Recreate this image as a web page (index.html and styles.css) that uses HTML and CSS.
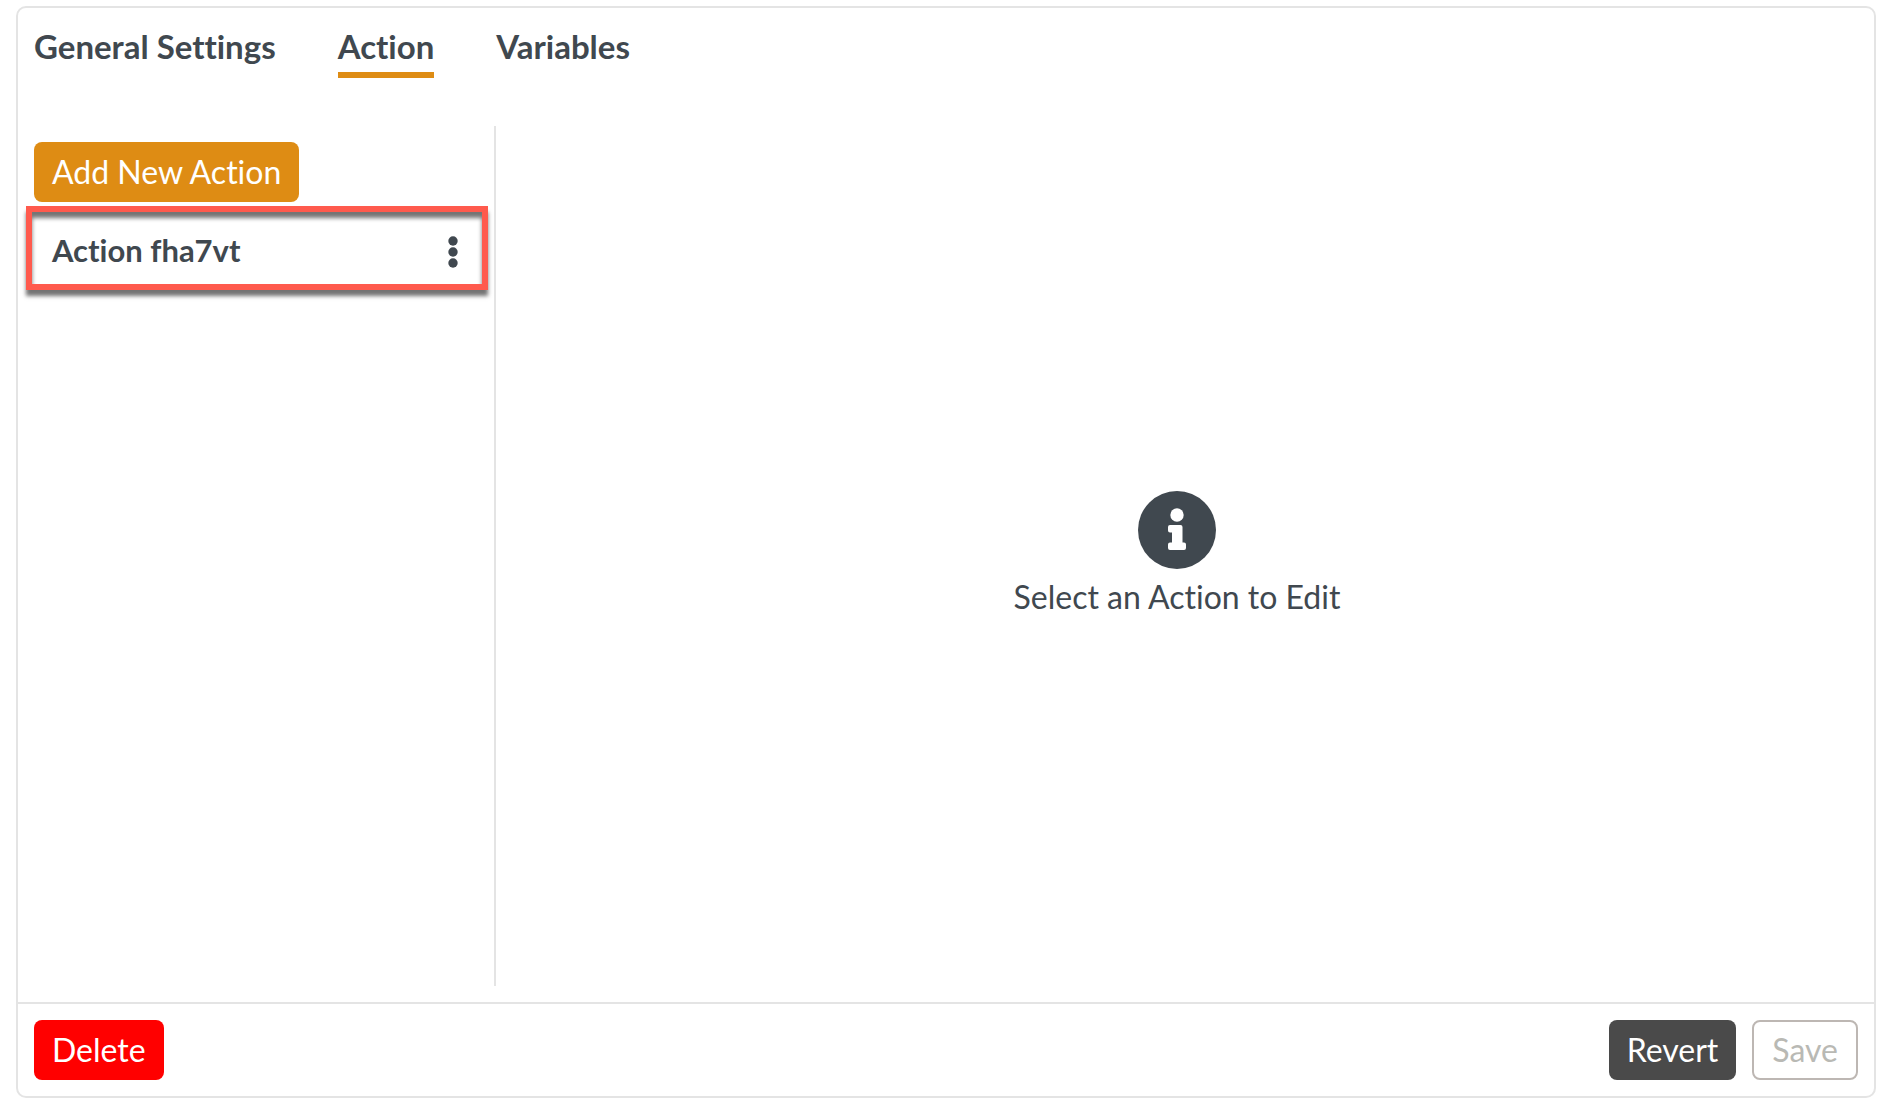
FILE: index.html
```html
<!DOCTYPE html>
<html lang="en">
<head>
    <meta charset="UTF-8">
    <meta name="viewport" content="width=device-width, initial-scale=1.0">
    <title>Action</title>
    <link rel="stylesheet" href="styles.css">
</head>
<body>
    <div class="card">
        <nav class="tabs">
            <a class="tab" href="#general">General Settings</a>
            <a class="tab active" href="#action" aria-current="page">Action</a>
            <a class="tab" href="#variables">Variables</a>
        </nav>

        <main class="content">
            <aside class="sidebar">
                <button type="button" class="btn btn-primary">Add New Action</button>
                <div class="action-row">
                    <a class="action-name" href="#fha7vt">Action fha7vt</a>
                    <button type="button" class="menu-button" aria-label="Action menu">
                        <svg width="10" height="32" viewBox="0 0 10 32" fill="currentColor">
                            <circle cx="5" cy="5" r="4.7"/>
                            <circle cx="5" cy="16" r="4.7"/>
                            <circle cx="5" cy="27" r="4.7"/>
                        </svg>
                    </button>
                </div>
            </aside>
            <section class="empty">
                <svg width="78" height="78" viewBox="0 0 78 78" aria-hidden="true">
                    <circle cx="39" cy="39" r="39" fill="#40484f"/>
                    <circle cx="39" cy="24" r="6.7" fill="#fff"/>
                    <path fill="#fff" d="M32 34h10.500a2 2 0 0 1 2 2v15.500h1.500a2 2 0 0 1 2 2v3.500a2 2 0 0 1-2 2H32a2 2 0 0 1-2-2v-3.500a2 2 0 0 1 2-2h2V41.500h-2a2 2 0 0 1-2-2V36a2 2 0 0 1 2-2z"/>
                </svg>
                <p>Select an Action to Edit</p>
            </section>
        </main>

        <footer class="footer">
            <button type="button" class="btn btn-danger">Delete</button>
            <div class="footer-right">
                <button type="button" class="btn btn-dark">Revert</button>
                <button type="button" class="btn btn-outline" disabled>Save</button>
            </div>
        </footer>
    </div>
</body>
</html>
```

FILE: styles.css
```css
* {
    box-sizing: border-box;
}
body {
    margin: 0;
    padding: 6px 16px 0;
    min-height: 100vh;
    display: flex;
    font-family: Lato, "Open Sans", sans-serif;
    font-size: 32px;
    font-variant-ligatures: none;
    line-height: 40px;
    color: #40484f;
    background-color: #fff;
}
.card {
    flex: 1;
    display: flex;
    flex-direction: column;
    border: 2px solid #e4e4e4;
    border-radius: 10px;
}
.tabs {
    display: flex;
    gap: 62px;
    padding: 18px 16px 0;
}
.tab {
    padding-bottom: 6px;
    border-bottom: 6px solid transparent;
    color: inherit;
    font-size: 33px;
    font-weight: bold;
    text-decoration: none;
}
.tab.active {
    border-bottom-color: #de8c14;
}
.content {
    flex: 1;
    display: flex;
    padding: 48px 16px 16px 0;
}
.sidebar {
    flex: 0 0 478px;
    padding: 16px 6px 0 8px;
    border-right: 2px solid #e4e4e4;
}
.btn {
    display: block;
    padding: 8px 16px;
    border: 2px solid transparent;
    border-radius: 8px;
    font: inherit;
    color: #fff;
    cursor: pointer;
}
.btn-primary {
    margin-left: 8px;
    background-color: #de8c14;
}
.btn-danger {
    background-color: #ff0000;
}
.btn-dark {
    background-color: #4a4a4a;
}
.btn-outline {
    padding: 8px 18px;
    background-color: #fff;
    border-color: #bdb7b3;
    color: #b9b9b4;
    cursor: default;
}
/* selected action */
.action-row {
    display: flex;
    align-items: center;
    justify-content: space-between;
    height: 84px;
    margin-top: 4px;
    padding: 4px 24px 0 20px;
    border: 6px solid #ff5a4d;
    box-shadow: 0 6px 4px rgba(0, 0, 0, 0.55), inset 0 6px 4px rgba(0, 0, 0, 0.55);
}
.action-name {
    color: inherit;
    font-size: 31px;
    font-weight: bold;
    text-decoration: none;
}
.menu-button {
    display: flex;
    padding: 4px 0 0;
    border: none;
    background: none;
    color: inherit;
    cursor: pointer;
}
.empty {
    flex: 1;
    display: flex;
    flex-direction: column;
    align-items: center;
    justify-content: center;
    gap: 8px;
    padding-bottom: 4px;
}
.empty p {
    margin: 0;
}
.footer {
    display: flex;
    justify-content: space-between;
    padding: 16px;
    border-top: 2px solid #e4e4e4;
}
.footer-right {
    display: flex;
    gap: 16px;
}
```
